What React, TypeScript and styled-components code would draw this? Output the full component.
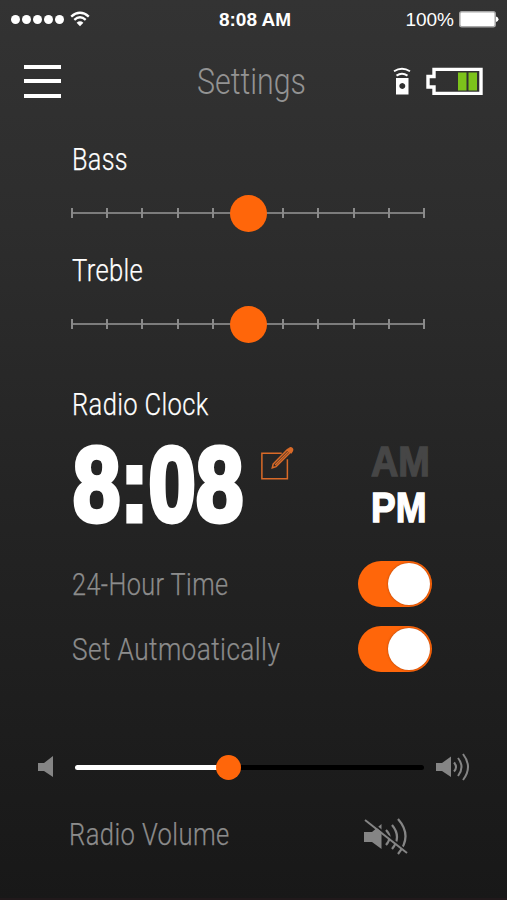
import React from "react";
import styled, { createGlobalStyle } from "styled-components";

const ORANGE = "#ff660a";
const GREY = "#8c8c8c";

const GlobalStyle = createGlobalStyle`
  body { margin: 0; background: #191919; }
  * { box-sizing: border-box; }
`;

const Screen = styled.main`
  width: 507px;
  height: 900px;
  overflow: hidden;
  display: flex;
  flex-direction: column;
  background: linear-gradient(#333333 0%, #2d2d2d 25%, #242424 55%, #181818 100%) border-box;
  border-bottom: 2px solid #21191b;
  font-family: Roboto, "Liberation Sans", sans-serif;
  color: #fff;
`;

const StatusBar = styled.header`
  height: 38px;
  padding: 0 8px 0 11px;
  display: grid;
  grid-template-columns: 1fr auto 1fr;
  align-items: center;
  font-family: "Liberation Sans", sans-serif;
`;

const Signal = styled.div`
  display: flex;
  align-items: center;
  gap: 2px;
  svg { margin-left: 4px; }
`;

const Dot = styled.i`
  width: 9px;
  height: 9px;
  border-radius: 50%;
  background: #fff;
`;

const Power = styled.div`
  display: flex;
  justify-content: flex-end;
  align-items: center;
  gap: 5px;
`;

const Text = styled.span<{ $size: number; $sx: number; $weight?: number; $color?: string; $spacing?: number }>`
  display: block;
  white-space: nowrap;
  line-height: 1;
  font-size: ${(p) => p.$size}px;
  font-weight: ${(p) => p.$weight ?? 300};
  color: ${(p) => p.$color ?? "#fff"};
  letter-spacing: ${(p) => p.$spacing ?? 0}px;
  transform: scaleX(${(p) => p.$sx});
  transform-origin: 0 50%;
`;

const Label = styled(Text)`
  -webkit-text-stroke: 0.25px currentColor;
`;

const NavBar = styled.nav`
  height: 86px;
  padding: 0 24px;
  display: flex;
  align-items: center;
`;

const MenuButton = styled.button`
  width: 37px;
  height: 33px;
  padding: 0;
  border: 0;
  background: none;
  display: flex;
  flex-direction: column;
  justify-content: space-between;
`;

const MenuLine = styled.i`
  display: block;
  width: 100%;
  height: 4px;
  background: #fff;
`;

const Title = styled.h1`
  width: 110px;
  margin: 0 0 0 136px;
`;

const Devices = styled.div`
  margin-left: auto;
  display: flex;
  align-items: center;
  gap: 15px;
`;

const Tone = styled.section`
  height: 111px;
  padding: 19px 82px 0 72px;
`;

const Scale = styled.div`
  position: relative;
  height: 14px;
  margin-top: 31px;
  margin-left: -1px;
  width: 354px;
  display: flex;
  justify-content: space-between;
  align-items: center;
  background: linear-gradient(#7c7c7c, #7c7c7c) center / 352px 2px no-repeat;
`;

const Tick = styled.i`
  width: 2px;
  height: 10px;
  background: #8a8a8a;
`;

const Knob = styled.i<{ $size: number; $left: number }>`
  position: absolute;
  left: ${(p) => p.$left}px;
  top: 50%;
  width: ${(p) => p.$size}px;
  height: ${(p) => p.$size}px;
  margin: -${(p) => p.$size / 2}px 0 0 -${(p) => p.$size / 2}px;
  border-radius: 50%;
  background: ${ORANGE};
`;

const Clock = styled.section`
  padding: 42px 75px 0 72px;
`;

const ClockRow = styled.div`
  height: 131px;
  display: flex;
  align-items: flex-start;
  font-family: "Liberation Sans", sans-serif;
`;

const Digits = styled.div`
  width: 188px;
  padding: 12px 0 0 1px;
  -webkit-text-stroke: 5px #fff;
`;

const Meridiem = styled.div`
  margin: 20px 0 0 77px;
  width: 61px;
  display: flex;
  flex-direction: column;
  gap: 3px;
  -webkit-text-stroke: 1.4px currentColor;
`;

const EditIcon = styled.svg`
  margin-top: 26px;
`;

const Option = styled.div`
  height: 65px;
  display: flex;
  justify-content: space-between;
  align-items: center;
`;

const Switch = styled.button`
  width: 74px;
  height: 46px;
  padding: 2px;
  border: 0;
  border-radius: 23px;
  background: ${ORANGE};
  display: flex;
  justify-content: flex-end;
  align-items: center;
  i {
    width: 42px;
    height: 42px;
    border-radius: 50%;
    background: #fff;
    box-shadow: 0 0 2px rgba(90, 30, 0, 0.6);
  }
`;

const VolumeRow = styled.section`
  height: 60px;
  margin-top: 56px;
  padding: 0 36px 0 38px;
  display: flex;
  align-items: center;
`;

const Track = styled.div`
  position: relative;
  width: 349px;
  height: 5px;
  margin: 1px 12px 0 21px;
  border-radius: 3px;
  background: linear-gradient(90deg, #fff 153px, #000 153px);
`;

const Footer = styled.footer`
  padding: 21px 98px 0 69px;
  display: flex;
  justify-content: space-between;
`;

const Wifi = () => (
  <svg width="20" height="16" viewBox="0 0 20 16" fill="none" stroke="#fff" strokeWidth="2.4">
    <path d="M1.2 5.6Q10-2 18.8 5.6M4.3 8.8Q10 3.9 15.7 8.8" />
    <path d="M10 15.3L6.6 11.7Q10 9 13.4 11.7Z" fill="#fff" stroke="none" />
  </svg>
);

const PhoneBattery = () => (
  <svg width="40" height="17" viewBox="0 0 40 17">
    <rect x="0.8" y="0.8" width="35.4" height="15" rx="2" fill="#fff" stroke="#a8a8a8" strokeWidth="1.5" />
    <path d="M37 5.5Q39.5 6 39.5 8.3T37 11Z" fill="#fff" />
  </svg>
);

const Remote = () => (
  <svg width="18" height="28" viewBox="0 0 18 28">
    <path d="M1 4.2Q9-.8 17 4.2M3.5 8.6Q9 5 14.5 8.6" fill="none" stroke="#fff" strokeWidth="1.9" />
    <path fillRule="evenodd" fill="#fff" d="M3 11h12.5v16.5H3zM9.3 16a3 3 0 1 0 .01 0z" />
  </svg>
);

const RadioBattery = () => (
  <svg width="57" height="28" viewBox="0 0 57 28">
    <path d="M8 2.4H55V26.5H8V20H2V9.5H8Z" fill="none" stroke="#fff" strokeWidth="3.4" />
    <path d="M32 5.5h8.5v18h-8.5zM42.5 5.5h8.5v18h-8.5z" fill="#7cc31b" />
  </svg>
);

const Edit = () => (
  <EditIcon width="36" height="36" viewBox="0 0 36 36" fill="none" stroke="#d96a28" strokeWidth="1.6">
    <path d="M23 6.5H2V33.5H29V13" />
    <path d="M14 18L29 2.8L32 5.8L17 20.8L13 22ZM16 19L30.5 4.5" />
    <path d="M29.5 2.8Q32 -.2 33.8 1.4T33 6Z" fill="#d96a28" />
  </EditIcon>
);

const Speaker = ({ d = "M0 7H6L15 0V21L6 15H0Z" }: { d?: string }) => <path d={d} fill="#858585" />;

const Ticks = () => (
  <Scale>
    {Array.from({ length: 11 }, (_, i) => <Tick key={i} />)}
    <Knob $size={37} $left={177} />
  </Scale>
);

export default function App() {
  return (
    <>
      <GlobalStyle />
      <Screen>
        <StatusBar>
          <Signal>
            {[0, 1, 2, 3, 4].map((n) => <Dot key={n} />)}
            <Wifi />
          </Signal>
          <Text $size={19} $sx={1} $weight={700}>8:08 AM</Text>
          <Power>
            <Text $size={19} $sx={1} $weight={400}>100%</Text>
            <PhoneBattery />
          </Power>
        </StatusBar>
        <NavBar>
          <MenuButton aria-label="Menu"><MenuLine /><MenuLine /><MenuLine /></MenuButton>
          <Title><Text $size={37} $sx={0.82} $color="#939393">Settings</Text></Title>
          <Devices><Remote /><RadioBattery /></Devices>
        </NavBar>
        <Tone>
          <Label $size={32} $sx={0.79} $spacing={0.4}>Bass</Label>
          <Ticks />
        </Tone>
        <Tone>
          <Label $size={32} $sx={0.8} $spacing={0.4}>Treble</Label>
          <Ticks />
        </Tone>
        <Clock>
          <Label $size={32} $sx={0.8} $spacing={0.4}>Radio Clock</Label>
          <ClockRow>
            <Digits><Text $size={105} $sx={0.81} $weight={700}>8:08</Text></Digits>
            <Edit />
            <Meridiem>
              <Text $size={43} $sx={0.88} $weight={700} $color="#464646">AM</Text>
              <Text $size={43} $sx={0.86} $weight={700}>PM</Text>
            </Meridiem>
          </ClockRow>
          <Option><Label $size={32} $sx={0.79} $spacing={0.5} $color={GREY}>24-Hour Time</Label><Switch><i /></Switch></Option>
          <Option><Label $size={32} $sx={0.82} $spacing={0.5} $color={GREY}>Set Autmoatically</Label><Switch><i /></Switch></Option>
        </Clock>
        <VolumeRow>
          <svg width="16" height="22" viewBox="0 0 16 22"><Speaker /></svg>
          <Track><Knob $size={25} $left={153} /></Track>
          <svg width="34" height="28" viewBox="0 0 34 28">
            <Speaker d="M0 10H6L15 3.5V24L6 18H0Z" />
            <path d="M18 9.5Q22 14 18 18.5M22 5Q29 14 22 23M27 1Q37 14 27 27" fill="none" stroke="#858585" strokeWidth="2" />
          </svg>
        </VolumeRow>
        <Footer>
          <Label $size={32} $sx={0.8} $spacing={0.5} $color={GREY}>Radio Volume</Label>
          <svg width="45" height="38" viewBox="0 0 45 38">
            <Speaker d="M0 14H8L17.5 6V31L8 24H0Z" />
            <path d="M22 12Q29 19 22 27M28 7Q38 19 28 31M34 1Q49 18 34 36" fill="none" stroke="#858585" strokeWidth="2.2" />
            <path d="M2.5 .5L44 34" stroke="#1c1c1c" strokeWidth="2" />
            <path d="M1 2L43 35" stroke="#858585" strokeWidth="2" />
          </svg>
        </Footer>
      </Screen>
    </>
  );
}
